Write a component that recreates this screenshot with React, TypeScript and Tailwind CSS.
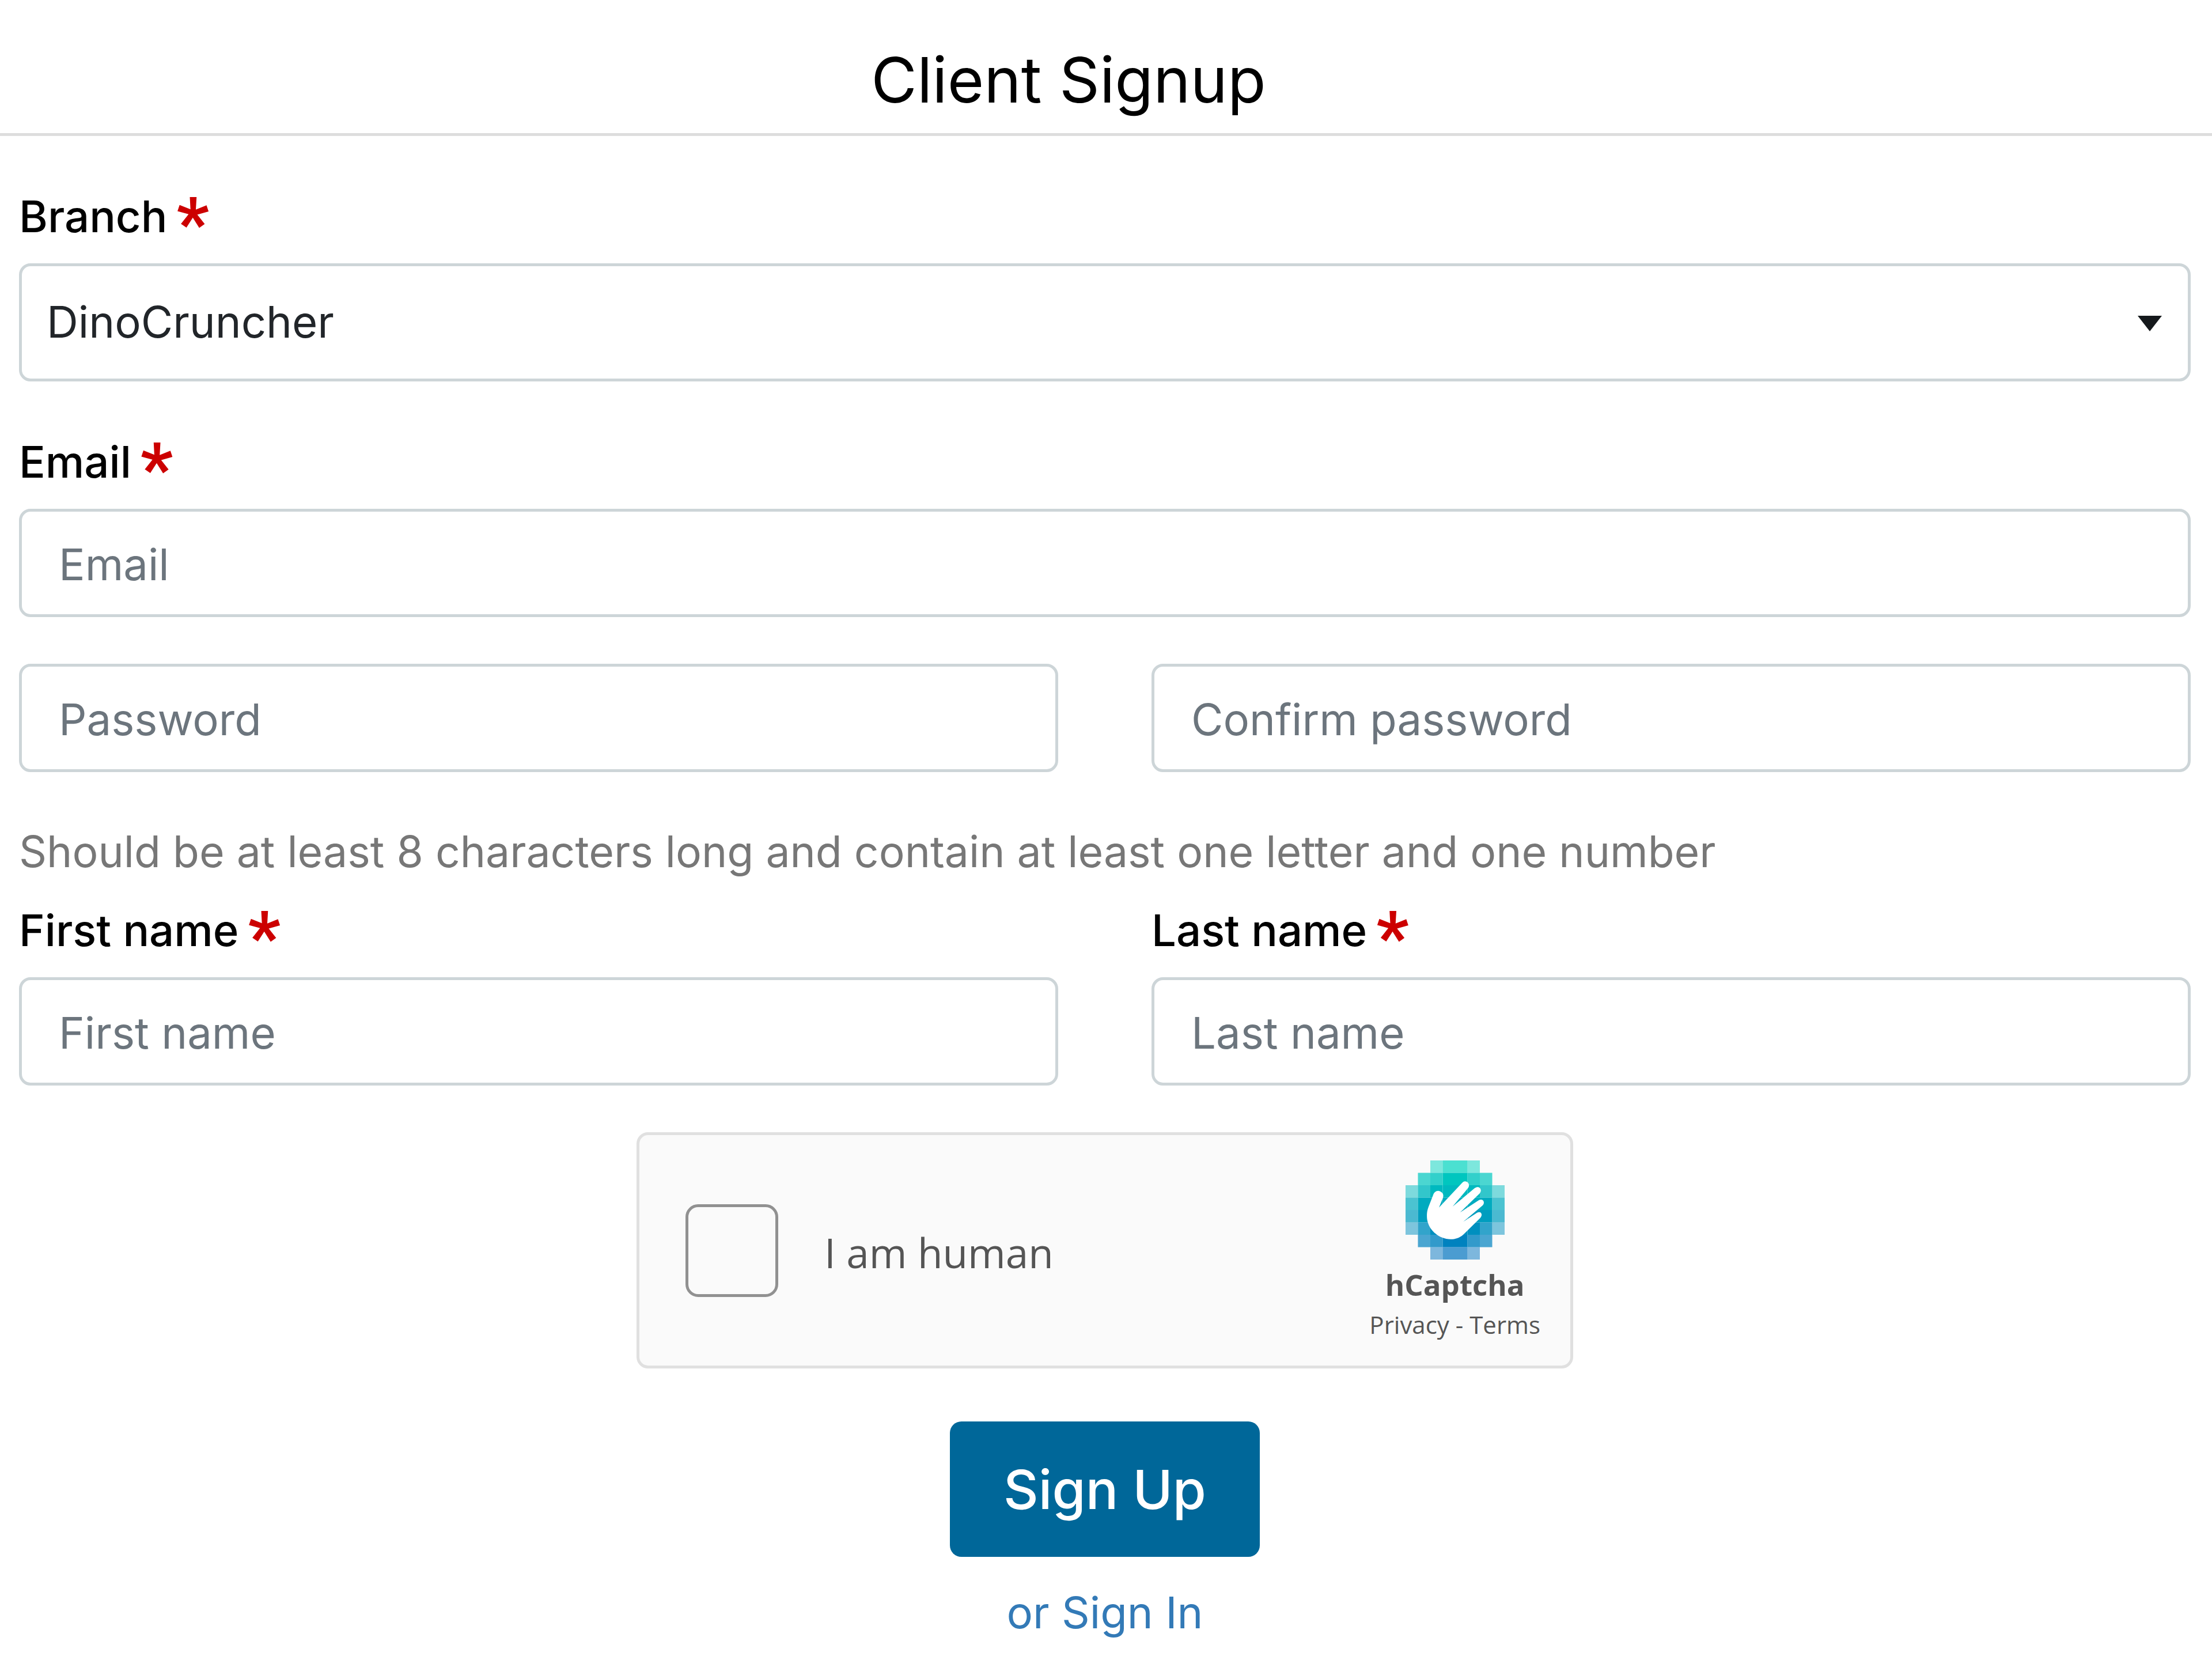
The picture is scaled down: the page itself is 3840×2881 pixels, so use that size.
import { useState } from 'react';
import type { InputHTMLAttributes, ReactNode } from 'react';

// Pixel rows of the badge, top to bottom. start is the first lit column.
const badgeRows = [
  { fill: '#00D4BF', start: 2, alpha: [0.5, 0.7, 0.7, 0.5] },
  { fill: '#00C6BF', start: 1, alpha: [0.7, 0.8, 1, 1, 0.8, 0.7] },
  { fill: '#00B9BF', start: 0, alpha: [0.5, 0.8, 1, 1, 1, 1, 0.8, 0.5] },
  { fill: '#00ABBF', start: 0, alpha: [0.7, 1, 1, 1, 1, 1, 1, 0.7] },
  { fill: '#009DBF', start: 0, alpha: [0.7, 1, 1, 1, 1, 1, 1, 0.7] },
  { fill: '#008FBF', start: 0, alpha: [0.5, 0.8, 1, 1, 1, 1, 0.8, 0.5] },
  { fill: '#0082BF', start: 1, alpha: [0.7, 0.8, 1, 1, 0.8, 0.7] },
  { fill: '#0074BF', start: 2, alpha: [0.5, 0.7, 0.7, 0.5] },
];

function CaptchaLogo() {
  return (
    <svg viewBox="0 0 32 32" className="w-[172px] h-[172px]" aria-hidden="true">
      {badgeRows.map((row, y) =>
        row.alpha.map((alpha, i) => (
          <rect
            key={`${y}-${i}`}
            x={(row.start + i) * 4}
            y={y * 4}
            width={4}
            height={4}
            fill={row.fill}
            opacity={alpha}
          />
        )),
      )}
      {/* Hand */}
      <path
        d="M8.9 11.2C9.3 10.1 10.2 9.5 11.2 10C12.2 10.5 12.4 11.3 12 12.3L10.8 15.2L18.3 7.2C19.4 6 21.2 7.5 20.2 8.9L15.2 14.9L22.4 8.9C23.8 7.9 25 9.5 23.9 10.7L17.6 16.8L23.6 12.9C25 12.1 25.9 13.6 24.8 14.6L18.6 19.8L23.1 16.9C24.4 16.2 25.1 17.5 24.1 18.6L18.6 24C16.6 25.7 14 25.8 11.8 24.9C8.8 23.6 6.9 21 6.9 18C6.9 16.5 7.1 15.9 7.5 14.8Z"
        fill="#fff"
      />
    </svg>
  );
}

function RequiredLabel({ htmlFor, children }: { htmlFor: string; children: ReactNode }) {
  return (
    <label htmlFor={htmlFor} className="flex items-center gap-4 mb-[28px] pt-px h-[109px] text-[76px] leading-[108px] font-medium text-black">
      {children}
      <span className="pt-7 font-[Roboto,sans-serif] text-[124px] leading-none font-bold text-[#cc0000]">*</span>
    </label>
  );
}

function TextInput(props: InputHTMLAttributes<HTMLInputElement>) {
  return (
    <input
      {...props}
      className="block w-full h-[188px] pt-1 px-[64px] border-[5px] border-[#cdd5d8] rounded-[20px] bg-white text-[76px] text-[#212529] placeholder:text-[#6c757d] placeholder:opacity-100"
    />
  );
}

export default function App() {
  const [branch, setBranch] = useState('DinoCruncher');

  return (
    <div className="min-h-screen bg-white font-[Inter,sans-serif] text-[76px] leading-[108px]">
      {/* Header */}
      <header className="pt-[60px] pb-[15px] pr-[130px] border-b-[5px] border-[#dddddd]">
        <h1 className="text-center text-[109px] leading-[156px] font-normal text-black">Client Signup</h1>
      </header>

      <form className="pt-[84px] pl-[33px] pr-[37px]" onSubmit={(e) => e.preventDefault()}>
        {/* Branch */}
        <RequiredLabel htmlFor="branch">Branch</RequiredLabel>
        <div className="relative mb-[84px]">
          <select
            id="branch"
            value={branch}
            onChange={(e) => setBranch(e.target.value)}
            className="block w-full h-[205px] pl-[43px] pr-[120px] pb-1 appearance-none border-[5px] border-[#cdd5d8] rounded-[20px] bg-white text-[76px] text-[#212529]"
          >
            <option>DinoCruncher</option>
          </select>
          <svg
            viewBox="0 0 42 27"
            className="absolute right-[50px] top-[91px] w-[42px] h-[27px] pointer-events-none"
            aria-hidden="true"
          >
            <path d="M0 0H42L21 27Z" fill="#15191c" />
          </svg>
        </div>

        {/* Account */}
        <RequiredLabel htmlFor="email">Email</RequiredLabel>
        <TextInput id="email" type="email" placeholder="Email" />
        <div className="grid grid-cols-2 gap-x-[162px] mt-[81px]">
          <TextInput type="password" placeholder="Password" aria-label="Password" />
          <TextInput type="password" placeholder="Confirm password" aria-label="Confirm password" />
        </div>
        <p className="mt-[84px] mb-[27px] text-[75px] text-[#777777]">
          Should be at least 8 characters long and contain at least one letter and one number
        </p>

        {/* Name */}
        <div className="grid grid-cols-2 gap-x-[162px] mb-[81px]">
          <div>
            <RequiredLabel htmlFor="first-name">First name</RequiredLabel>
            <TextInput id="first-name" type="text" placeholder="First name" />
          </div>
          <div>
            <RequiredLabel htmlFor="last-name">Last name</RequiredLabel>
            <TextInput id="last-name" type="text" placeholder="Last name" />
          </div>
        </div>

        {/* Captcha */}
        <div className="flex items-center w-[1626px] h-[410px] mx-auto pl-[80px] pr-[52px] border-[5px] border-[#e0e0e0] rounded-[20px] bg-[#fafafa] font-[Open_Sans,sans-serif]">
          <input
            id="human"
            type="checkbox"
            className="w-[161px] h-[161px] appearance-none border-[5px] border-[#919191] rounded-[22px] bg-[#fafafa]"
          />
          <label htmlFor="human" className="pl-[80px] pt-2 text-[71px] text-[#555555]">
            I am human
          </label>
          <div className="flex flex-col items-center ml-auto pt-2 text-[#555555]">
            <CaptchaLogo />
            <span className="mt-2 text-[51px] leading-[70px] font-bold">hCaptcha</span>
            <span className="text-[42px] leading-[70px]">
              <a href="#privacy">Privacy</a> - <a href="#terms">Terms</a>
            </span>
          </div>
        </div>

        {/* Actions */}
        <div className="flex flex-col items-center">
          <button
            type="submit"
            className="mt-[92px] mb-[42px] h-[235px] px-[93px] rounded-[20px] bg-[#006799] text-[94px] leading-[140px] font-medium text-white"
          >
            Sign Up
          </button>
          <a href="#sign-in" className="text-[#337ab7]">
            or Sign In
          </a>
        </div>
      </form>
    </div>
  );
}
